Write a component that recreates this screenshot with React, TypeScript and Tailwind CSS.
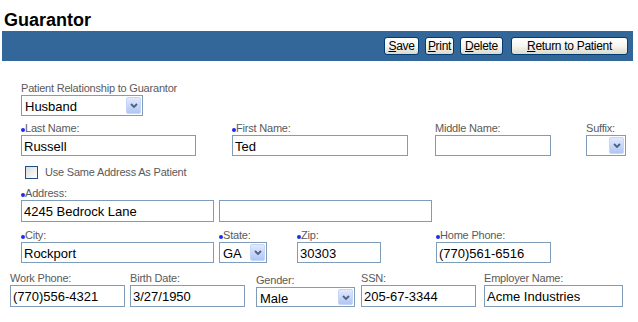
import React from "react";

const Chevron = () => (
  <svg width="8" height="5" viewBox="0 0 8 5">
    <path d="M1 1 L4 4 L7 1" fill="none" stroke="#4d6185" strokeWidth="1.8" />
  </svg>
);

interface LabelProps {
  text: string;
  req?: boolean;
}

const Label: React.FC<LabelProps> = ({ text, req }) => (
  <div className="h-[14px] leading-[14px] text-[11px] text-[#5a5a5a] tracking-[-0.2px] whitespace-nowrap">
    {req && (
      <span className="inline-block w-[4px] h-[4px] rounded-full bg-[#1c2ef0]" />
    )}
    {text}
  </div>
);

interface BoxProps {
  value?: string;
  h?: string;
}

const TextBox: React.FC<BoxProps> = ({ value = "", h = "h-[21px]" }) => (
  <div
    className={`${h} w-full border border-[#7f9db9] bg-white pl-[2px] pt-[2px] text-[13px] leading-[17px] text-black whitespace-nowrap overflow-hidden`}
  >
    {value}
  </div>
);

const Select: React.FC<BoxProps> = ({ value = "", h = "h-[21px]" }) => (
  <div
    className={`${h} w-full border border-[#7f9db9] bg-white p-[1px] flex`}
  >
    <div className="flex-1 pl-[2px] pt-[1px] text-[13px] leading-[17px] text-black whitespace-nowrap overflow-hidden">
      {value}
    </div>
    <div className="w-[15px] rounded-[2px] border border-[#c6d6fb] bg-gradient-to-b from-[#e1eafd] to-[#b1c6f5] flex items-center justify-center">
      <Chevron />
    </div>
  </div>
);

interface FieldProps {
  label: string;
  req?: boolean;
  className: string;
  children: React.ReactNode;
}

const Field: React.FC<FieldProps> = ({ label, req, className, children }) => (
  <div className={`shrink-0 ${className}`}>
    <Label text={label} req={req} />
    {children}
  </div>
);

const BarButton: React.FC<{ first: string; rest: string; w: string }> = ({
  first,
  rest,
  w,
}) => (
  <div
    className={`${w} h-[18px] rounded-[3px] border border-[#003c74] bg-gradient-to-b from-white via-[#f6f5f0] to-[#dcd9cc] text-center text-[12px] leading-[16px] tracking-[-0.3px] text-black`}
  >
    <span className="underline underline-offset-1">{first}</span>
    {rest}
  </div>
);

export default function App() {
  return (
    <div className="w-[638px] h-[322px] bg-white overflow-hidden font-['Liberation_Sans',Arial,sans-serif]">
      {/* Title */}
      <h1 className="pl-[4px] pt-[9px] text-[18px] leading-[22px] font-bold text-black">
        Guarantor
      </h1>

      {/* Toolbar */}
      <div className="ml-[2px] w-[631px] h-[30px] bg-[#336699] flex items-center justify-end pr-[5px]">
        <BarButton first="S" rest="ave" w="w-[35px]" />
        <div className="ml-[6px]">
          <BarButton first="P" rest="rint" w="w-[29px]" />
        </div>
        <div className="ml-[6px]">
          <BarButton first="D" rest="elete" w="w-[43px]" />
        </div>
        <div className="ml-[8px]">
          <BarButton first="R" rest="eturn to Patient" w="w-[117px]" />
        </div>
      </div>

      {/* Relationship */}
      <div className="mt-[20px] flex pl-[21px]">
        <Field label="Patient Relationship to Guarantor" className="w-[122px]">
          <Select value="Husband" />
        </Field>
      </div>

      {/* Name */}
      <div className="mt-[5px] flex pl-[21px]">
        <Field label="Last Name:" req className="w-[175px]">
          <TextBox value="Russell" />
        </Field>
        <Field label="First Name:" req className="w-[176px] ml-[36px]">
          <TextBox value="Ted" />
        </Field>
        <Field label="Middle Name:" className="w-[116px] ml-[27px]">
          <TextBox />
        </Field>
        <Field label="Suffix:" className="w-[40px] ml-[35px]">
          <Select />
        </Field>
      </div>

      {/* Same address */}
      <div className="mt-[10px] flex items-center pl-[25px] h-[13px]">
        <div className="w-[13px] h-[13px] border border-[#1c5180] bg-gradient-to-br from-[#dcdcd7] to-white" />
        <span className="ml-[7px] text-[11px] leading-[13px] text-[#5a5a5a] tracking-[-0.2px]">
          Use Same Address As Patient
        </span>
      </div>

      {/* Address */}
      <div className="mt-[7px] flex pl-[21px] items-end">
        <Field label="Address:" req className="w-[193px]">
          <TextBox value="4245 Bedrock Lane" h="h-[22px]" />
        </Field>
        <div className="ml-[5px] w-[213px] shrink-0">
          <TextBox h="h-[22px]" />
        </div>
      </div>

      {/* City / State / Zip / Home phone */}
      <div className="mt-[6px] flex pl-[21px]">
        <Field label="City:" req className="w-[193px]">
          <TextBox value="Rockport" />
        </Field>
        <Field label="State:" req className="w-[48px] ml-[5px]">
          <Select value="GA" />
        </Field>
        <Field label="Zip:" req className="w-[84px] ml-[30px]">
          <TextBox value="30303" />
        </Field>
        <Field label="Home Phone:" req className="w-[115px] ml-[55px]">
          <TextBox value="(770)561-6516" />
        </Field>
      </div>

      {/* Work / Birth / Gender / SSN / Employer */}
      <div className="mt-[8px] flex pl-[10px]">
        <Field label="Work Phone:" className="w-[115px]">
          <TextBox value="(770)556-4321" h="h-[22px]" />
        </Field>
        <Field label="Birth Date:" className="w-[115px] ml-[5px]">
          <TextBox value="3/27/1950" h="h-[22px]" />
        </Field>
        <Field label="Gender:" className="w-[99px] ml-[11px] pt-[2px]">
          <Select value="Male" h="h-[20px]" />
        </Field>
        <Field label="SSN:" className="w-[115px] ml-[6px]">
          <TextBox value="205-67-3344" h="h-[22px]" />
        </Field>
        <Field label="Employer Name:" className="w-[139px] ml-[8px]">
          <TextBox value="Acme Industries" h="h-[22px]" />
        </Field>
      </div>
    </div>
  );
}
